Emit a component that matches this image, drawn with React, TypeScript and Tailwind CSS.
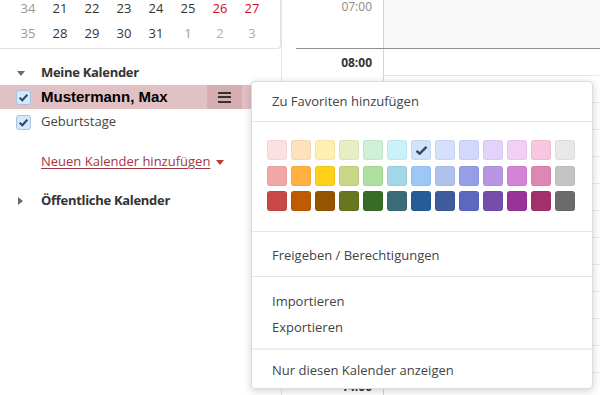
const font = "font-['Open_Sans','Noto_Sans',sans-serif]";

const weeks = [
  { kw: "34", days: ["21", "22", "23", "24", "25", "26", "27"], other: [] as number[] },
  { kw: "35", days: ["28", "29", "30", "31", "1", "2", "3"], other: [4, 5, 6] },
];

const swatches = [
  ["#fde0e2", "#fde2bd", "#fff0b0", "#e6efc4", "#cdf1d4", "#cbf1fb", "#cfe3fb", "#d6e0fc", "#d3d7fb", "#e3d3fb", "#f4cff5", "#f6c7df", "#e8e8e8"],
  ["#f4a7a7", "#ffb142", "#ffcf1a", "#c8d685", "#addf9f", "#a2d8e6", "#9bc8f7", "#b0c2ec", "#959ee9", "#b896e6", "#d283d6", "#e086b2", "#c4c4c4"],
  ["#c84848", "#be5a00", "#955400", "#67761f", "#386b25", "#3a6c78", "#245d9a", "#405b9c", "#5a68c0", "#754daa", "#993399", "#a2306a", "#6b6b6b"],
];

const Check = () => (
  <span className="w-[15px] h-[15px] shrink-0 rounded-[3px] border border-[#a6c3e2] bg-[#d7e7f8] flex items-center justify-center">
    <svg viewBox="0 0 12 12" className="w-[11px] h-[11px]">
      <path d="M1.8 6.4 L4.7 9 L10.2 3" stroke="#2d4866" strokeWidth="2.2" fill="none" />
    </svg>
  </span>
);

const MiniCalendar = () => (
  <div className="h-[53px] border-b border-r border-[#e2e2e2] rounded-br-[4px] pl-3 w-[281px]">
    {weeks.map((w, i) => (
      <div key={w.kw} className={`flex h-[25px] items-center ${i === 0 ? "-mt-[4px]" : ""}`}>
        <span className="w-8 text-center text-[#999]">{w.kw}</span>
        {w.days.map((d, j) => {
          const other = w.other.includes(j);
          const weekend = j >= 5;
          let color = "text-[#333]";
          if (other) color = weekend ? "text-[#c9a3a6]" : "text-[#999]";
          else if (weekend) color = "text-[#c8102e]";
          return (
            <span key={d} className={`w-8 text-center ${color}`}>
              {d}
            </span>
          );
        })}
      </div>
    ))}
  </div>
);

const CalendarList = () => (
  <div className="pt-[13px]">
    <div className="flex items-center h-[22px]">
      <span className="w-[41px] pl-[17px]">
        <svg viewBox="0 0 8 5" className="w-[8px] h-[5px]">
          <path d="M0 0 L8 0 L4 5 Z" fill="#6b6b6b" />
        </svg>
      </span>
      <span className="font-bold text-[#333] tracking-[-0.3px]">Meine Kalender</span>
    </div>
    <div className="flex items-center h-[24px] mt-px bg-[#e2c1c4]">
      <span className="pl-4 pr-[10px]">
        <Check />
      </span>
      <span className="flex-1 font-['Liberation_Sans',Arial,sans-serif] font-bold text-[15px] text-black">
        Mustermann, Max
      </span>
      <span className="w-[35px] h-full bg-[#d6adb1] flex flex-col items-center justify-center gap-[2.5px]">
        <span className="w-[13px] h-[2px] bg-[#333]" />
        <span className="w-[13px] h-[2px] bg-[#333]" />
        <span className="w-[13px] h-[2px] bg-[#333]" />
      </span>
      <span className="w-[39px]" />
    </div>
    <div className="flex items-center h-[24px] mt-px">
      <span className="pl-4 pr-[10px]">
        <Check />
      </span>
      <span className="text-[#444]">Geburtstage</span>
    </div>
    <div className="flex items-center h-[22px] mt-[17px] pl-[41px]">
      <span className="text-[#a2353f] underline decoration-[#a2353f] underline-offset-[2px]">
        Neuen Kalender hinzufügen
      </span>
      <svg viewBox="0 0 8 5" className="w-[8px] h-[5px] ml-[6px]">
        <path d="M0 0 L8 0 L4 5 Z" fill="#c0392b" />
      </svg>
    </div>
    <div className="flex items-center h-[22px] mt-[17px]">
      <span className="w-[41px] pl-[18px]">
        <svg viewBox="0 0 5 8" className="w-[5px] h-[8px]">
          <path d="M0 0 L5 4 L0 8 Z" fill="#6b6b6b" />
        </svg>
      </span>
      <span className="font-bold text-[#333] tracking-[-0.3px]">Öffentliche Kalender</span>
    </div>
  </div>
);

const hours = ["08:00", "", "09:00", "", "10:00", "", "11:00", "", "12:00", "", "13:00", "", "14:00", ""];

const TimeGrid = () => (
  <div className="flex-1 flex flex-col">
    <div className="flex h-[48px] shrink-0">
      <div className="w-[101px] text-right pr-[11px] text-[12px] leading-[14px] text-[#8a8a8a]">07:00</div>
      <div className="flex-1 border-l border-[#d4d4d4] bg-[#f8f8f8]" />
    </div>
    <div className="h-[1px] shrink-0 ml-[14px] bg-[#8e8e8e]" />
    {hours.map((h, i) => (
      <div key={i} className="flex h-[27px] shrink-0">
        <div className="w-[101px] text-right pr-[11px] text-[12px] font-bold text-[#333] flex items-center justify-end">
          {h}
        </div>
        <div className="flex-1 border-l border-b border-[#d4d4d4] border-b-[#e8e8e8]" />
      </div>
    ))}
  </div>
);

const MenuItem = ({ children }: { children: React.ReactNode }) => (
  <div className="h-[26px] flex items-center pl-[20px] text-[#444]">{children}</div>
);

const Menu = () => (
  <div className="absolute left-[251px] top-[81px] w-[342px] h-[308px] bg-white rounded-[4px] border border-[#dcdcdc] shadow-[0_2px_8px_rgba(0,0,0,0.18)] flex flex-col">
    <div className="h-[39px] flex items-center pl-[20px] text-[#444]">Zu Favoriten hinzufügen</div>
    <div className="border-t border-[#e6e6e6] pt-[18px] pb-[20px] pl-[15px] flex flex-col gap-[5.5px]">
      {swatches.map((row, r) => (
        <div key={r} className="flex gap-[4px]">
          {row.map((c, i) => (
            <span
              key={c}
              style={{ backgroundColor: c }}
              className="w-[20px] h-[20px] rounded-[3px] border border-black/5 flex items-center justify-center"
            >
              {r === 0 && i === 6 && (
                <svg viewBox="0 0 14 12" className="w-[13px] h-[11px]">
                  <path d="M1.5 6.5 L5 9.5 L12.5 2" stroke="#34475f" strokeWidth="2.6" fill="none" />
                </svg>
              )}
            </span>
          ))}
        </div>
      ))}
    </div>
    <div className="border-t border-[#e6e6e6] h-[45px] flex items-center pl-[20px] pt-[3px] text-[#444]">
      Freigeben / Berechtigungen
    </div>
    <div className="border-t border-[#e6e6e6] pt-[12px] pb-[7px]">
      <MenuItem>Importieren</MenuItem>
      <MenuItem>Exportieren</MenuItem>
    </div>
    <div className="border-t-2 border-[#eeeeee] flex-1 flex items-center pl-[20px] pt-[3px] text-[#444]">
      Nur diesen Kalender anzeigen
    </div>
  </div>
);

export default function App() {
  return (
    <div className={`relative flex w-[600px] h-[395px] overflow-hidden bg-white text-[13px] ${font}`}>
      <aside className="w-[282px] shrink-0 border-r border-[#e2e2e2]">
        <MiniCalendar />
        <CalendarList />
      </aside>
      <TimeGrid />
      <Menu />
    </div>
  );
}
